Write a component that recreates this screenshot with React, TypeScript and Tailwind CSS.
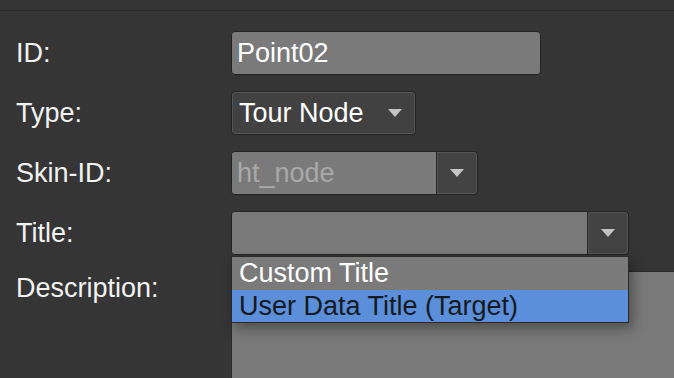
import React from 'react';

const Caret = () => (
  <svg width="14" height="8" viewBox="0 0 14 8" className="block">
    <polygon points="0,0 14,0 7,8" fill="#c4c4c4" />
  </svg>
);

const Label = ({ children, top }: { children: React.ReactNode; top?: boolean }) => (
  <div className={`text-[#f2f2f2] ${top ? 'pt-[1px] leading-[32px]' : 'h-[44px] flex items-center'}`}>{children}</div>
);

const App = () => {
  return (
    <div
      className="w-full h-[378px] bg-[#353535] overflow-hidden text-[27px]"
      style={{ fontFamily: '"Liberation Sans", Arial, sans-serif' }}
    >
      <div className="h-[11px] border-b border-[#2a2a2a]" />

      <div className="grid grid-cols-[215px_1fr] gap-y-[16px] pl-[16px] pt-[20px]">
        <Label>ID:</Label>
        <div className="w-[310px] h-[44px] bg-[#7a7a7a] rounded-[4px] border border-[#242424] flex items-center pl-[5px] text-white">
          Point02
        </div>

        <Label>Type:</Label>
        <div className="w-[185px] h-[44px] bg-[#414141] rounded-[4px] border border-[#242424] shadow-[inset_0_0_0_1px_#565656] flex items-center pl-[7px] pr-[13px] text-white justify-between">
          <span>Tour Node</span>
          <Caret />
        </div>

        <Label>Skin-ID:</Label>
        <div className="w-[247px] h-[44px] rounded-[4px] border border-[#242424] flex overflow-hidden">
          <div className="flex-1 bg-[#7a7a7a] flex items-center pl-[5px] text-[#a9a9a9] border-r border-[#262626]">
            ht_node
          </div>
          <div className="w-[40px] bg-[#434343] shadow-[inset_0_0_0_1px_#555555] rounded-r-[4px] flex items-center justify-center">
            <Caret />
          </div>
        </div>

        <Label>Title:</Label>
        <div className="relative w-[398px] h-[44px]">
          <div className="h-full rounded-[4px] border border-[#242424] flex overflow-hidden">
            <div className="flex-1 bg-[#7a7a7a] border-r border-[#262626]" />
            <div className="w-[40px] bg-[#434343] shadow-[inset_0_0_0_1px_#555555] rounded-r-[4px] flex items-center justify-center">
              <Caret />
            </div>
          </div>

          <div className="absolute z-10 left-0 top-[45px] w-[398px] border border-[#2a2a2a] shadow-[4px_6px_12px_rgba(0,0,0,0.35)]">
            <div className="h-[33px] bg-[#7a7a7a] flex items-center pl-[7px] text-white">Custom Title</div>
            <div className="h-[32px] bg-[#5b8fd9] flex items-center pl-[7px] text-[#151a22]">User Data Title (Target)</div>
          </div>
        </div>

        <Label top>Description:</Label>
        <div className="h-[200px] bg-[#7a7a7a] border-l border-t border-[#2a2a2a] rounded-tl-[4px]" />
      </div>
    </div>
  );
};

export default App;
